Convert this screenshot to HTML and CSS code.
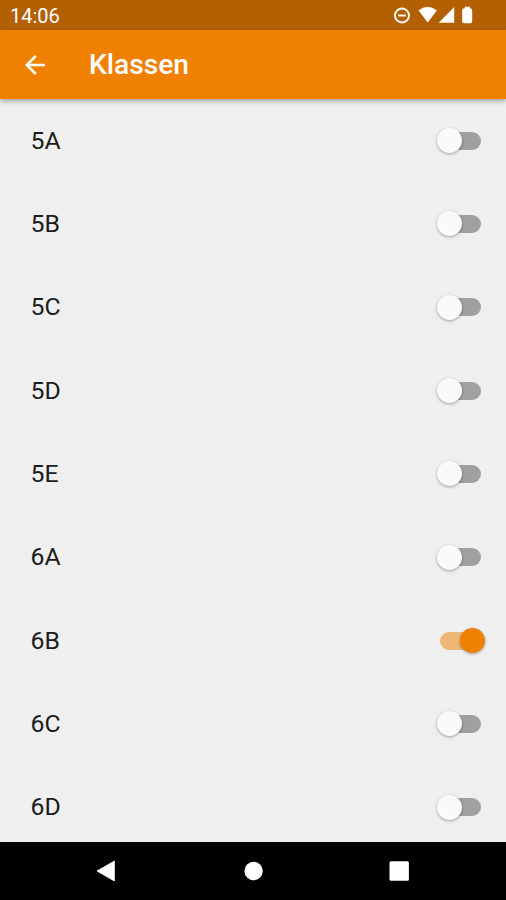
FILE: index.html
```html
<!DOCTYPE html>
<html lang="de">
<head>
    <meta charset="UTF-8">
    <meta name="viewport" content="width=device-width, initial-scale=1.0">
    <title>Klassen</title>
    <link rel="stylesheet" href="styles.css">
</head>
<body>

    <div class="status-bar">
        <span class="time">14:06</span>
        <svg class="status-icons" width="82" height="30" viewBox="0 0 82 30">
            <circle cx="10" cy="15.5" r="7" fill="none" stroke="#fff" stroke-width="1.9"/>
            <path d="M6 15.500h8" stroke="#fff" stroke-width="1.900"/>
            <path d="M27 10.500Q35.700 4 44.400 10.500L35.700 22z" fill="#fff" stroke="#fff" stroke-width="0.800" stroke-linejoin="round"/>
            <path d="M62.200 7v15.800H46.700z" fill="#fff"/>
            <path d="M72.800 6.800h5v1.500h0.700q1.700 0.500 1.700 2v11.200q0 1.700-1.700 1.700h-6.600q-1.700 0-1.700-1.700V10.300q0-1.500 1.700-2h0.900z" fill="#fff"/>
        </svg>
    </div>

    <div class="app-bar">
        <svg class="back-icon" width="22" height="22" viewBox="0 0 22 22">
            <path d="M21 11H3M11.800 2L2.800 11l9 9" fill="none" stroke="#fff" stroke-width="2.500"/>
        </svg>
        <h1>Klassen</h1>
    </div>

    <div class="class-list">
        <label class="row">5A<input type="checkbox" class="switch"></label>
        <label class="row">5B<input type="checkbox" class="switch"></label>
        <label class="row">5C<input type="checkbox" class="switch"></label>
        <label class="row">5D<input type="checkbox" class="switch"></label>
        <label class="row">5E<input type="checkbox" class="switch"></label>
        <label class="row">6A<input type="checkbox" class="switch"></label>
        <label class="row">6B<input type="checkbox" class="switch" checked></label>
        <label class="row">6C<input type="checkbox" class="switch"></label>
        <label class="row">6D<input type="checkbox" class="switch"></label>
    </div>

    <div class="nav-bar">
        <svg width="20" height="22" viewBox="0 0 20 22">
            <path d="M18.400 1v20L1 11z" fill="#fff" stroke="#fff" stroke-width="0.800" stroke-linejoin="round"/>
        </svg>
        <svg width="20" height="22" viewBox="0 0 20 22">
            <circle cx="10.600" cy="11" r="9.200" fill="#fff"/>
        </svg>
        <svg width="20" height="22" viewBox="0 0 20 22">
            <rect x="0.500" y="1.300" width="19.400" height="19.400" rx="1.500" fill="#fff"/>
        </svg>
    </div>

</body>
</html>
```
FILE: styles.css
```css
* {
    box-sizing: border-box;
}

body {
    font-family: Roboto, sans-serif;
    background-color: #efefef;
    margin: 0;
    height: 900px;
    display: flex;
    flex-direction: column;
    overflow: hidden;
}

.status-bar {
    background-color: #b26000;
    color: white;
    height: 30px;
    flex-shrink: 0;
    padding: 2px 30px 0 10px;
    display: flex;
    justify-content: space-between;
    align-items: center;
    font-size: 20px;
}

.status-icons {
    margin: -2px 2px 0 0;
}

.app-bar {
    background-color: #f08000;
    color: white;
    height: 69px;
    flex-shrink: 0;
    padding-left: 24px;
    display: flex;
    align-items: center;
    gap: 43px;
    z-index: 1;
    box-shadow: 0 2px 5px rgba(0, 0, 0, 0.35);
}

.app-bar h1 {
    margin: 0;
    font-size: 28.2px;
    font-weight: 500;
}

.class-list {
    flex: 1;
    min-height: 0;
    overflow: hidden;
}

.row {
    height: 83.33px;
    padding: 0 21px 1px 30.5px;
    display: flex;
    justify-content: space-between;
    align-items: center;
    font-size: 24.8px;
    color: #1c1c1c;
}

.switch {
    appearance: none;
    width: 49px;
    height: 25px;
    margin: 1px 0 0;
    display: grid;
}

.switch::before,
.switch::after {
    content: "";
    grid-area: 1 / 1;
    align-self: center;
}

/* track */
.switch::before {
    width: 41px;
    height: 18px;
    margin-left: 4px;
    border-radius: 9px;
    background-color: #a0a0a0;
}

/* thumb */
.switch::after {
    width: 25px;
    height: 25px;
    margin-left: 0.5px;
    border-radius: 50%;
    background-color: #fafafa;
    box-shadow: 0 1px 3px rgba(0, 0, 0, 0.35);
}

.switch:checked::before {
    background-color: #efb777;
}

.switch:checked::after {
    justify-self: end;
    background-color: #f08000;
}

.nav-bar {
    background-color: #000;
    height: 58px;
    flex-shrink: 0;
    padding: 0 97px 0 96px;
    display: flex;
    justify-content: space-between;
    align-items: center;
}
```
